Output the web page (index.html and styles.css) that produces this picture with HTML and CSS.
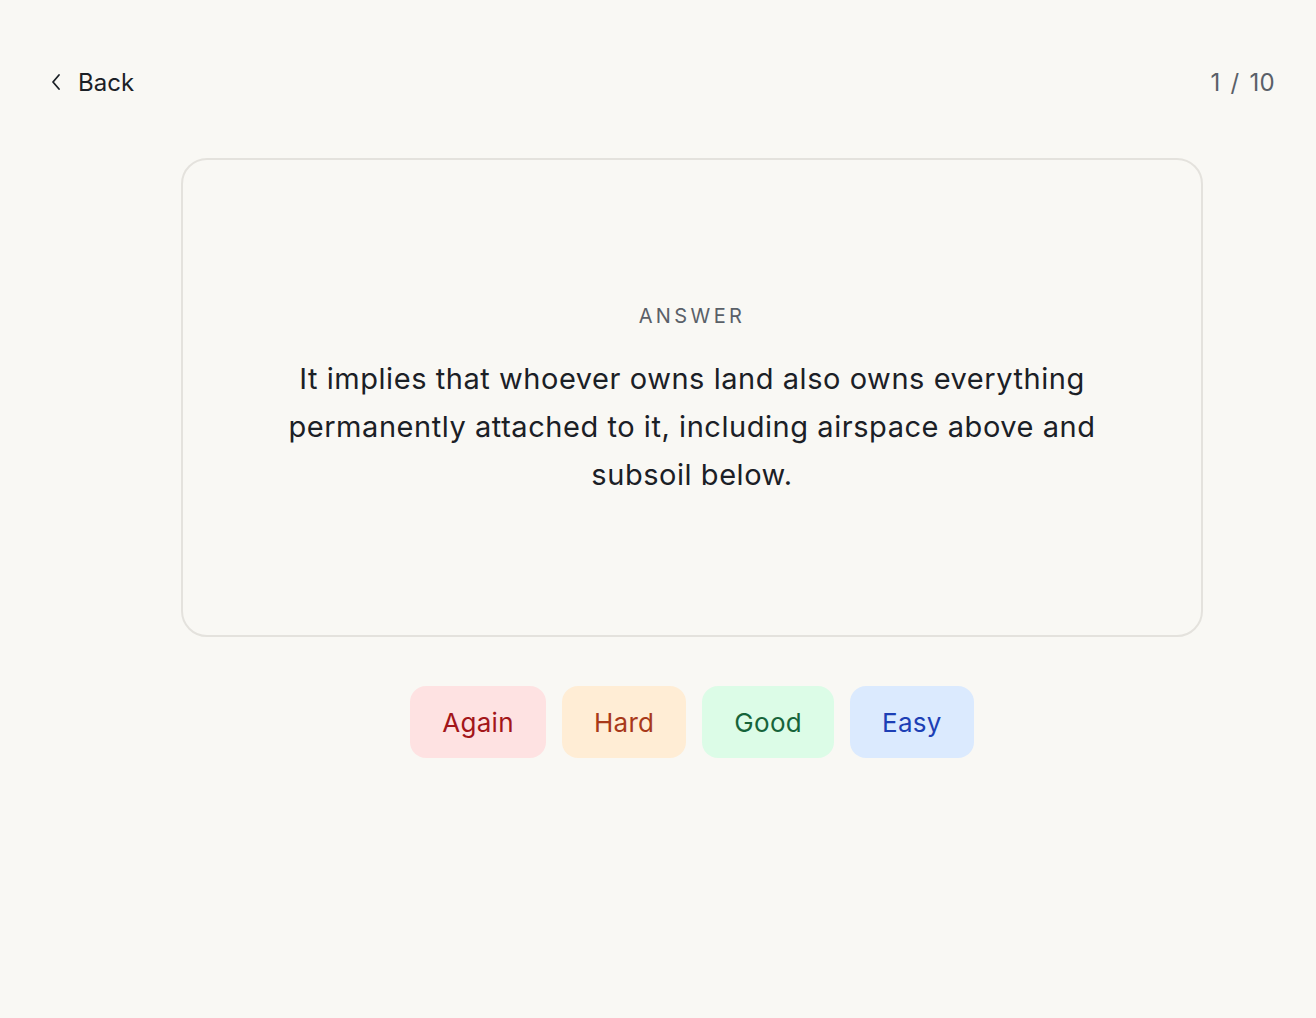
FILE: index.html
```html
<!DOCTYPE html>
<html lang="en">
<head>
<meta charset="utf-8">
<title>Review</title>
<link rel="stylesheet" href="styles.css">
</head>
<body>
<div class="page">
  <header class="topbar">
    <a class="back" href="#">
      <svg class="chev" width="12" height="18" viewBox="0 0 12 18" fill="none" stroke="currentColor" stroke-width="1.8" stroke-linecap="round" stroke-linejoin="round"><path d="M9 2 L3 9 L9 16"/></svg>
      <span>Back</span>
    </a>
    <div class="count">1 / 10</div>
  </header>
  <main class="main">
    <section class="card">
      <div class="label">ANSWER</div>
      <p class="answer">It implies that whoever owns land also owns everything permanently attached to it, including airspace above and subsoil below.</p>
    </section>
    <div class="actions">
      <button class="btn again">Again</button>
      <button class="btn hard">Hard</button>
      <button class="btn good">Good</button>
      <button class="btn easy">Easy</button>
    </div>
  </main>
</div>
</body>
</html>
```
FILE: styles.css
```css
* { box-sizing: border-box; }
html, body { margin: 0; padding: 0; }
body {
  background: #f9f8f4;
  font-family: "Inter", "Open Sans", sans-serif;
  color: #1b2026;
}
.page { min-height: 1018px; }
.topbar {
  display: flex;
  justify-content: space-between;
  align-items: center;
  padding: 64px 41px 0 50px;
  height: 100px;
}
.back {
  display: flex;
  align-items: center;
  gap: 16px;
  color: #1b2026;
  text-decoration: none;
  font-size: 24px;
}
.chev { display: block; }
.count {
  font-size: 24px;
  color: #5a6068;
  word-spacing: 3px;
  letter-spacing: 0.3px;
}
.main {
  padding-left: 181px;
  padding-top: 58px;
}
.card {
  width: 1022px;
  height: 479px;
  border: 2px solid #e4e2dd;
  border-radius: 26px;
  display: flex;
  flex-direction: column;
  align-items: center;
  justify-content: center;
  padding: 8px 60px 0;
  text-align: center;
}
.label {
  font-size: 20px;
  letter-spacing: 3.4px;
  color: #5a6068;
  margin-bottom: 27px;
}
.answer {
  margin: 0;
  font-size: 29px;
  letter-spacing: 0.55px;
  line-height: 48px;
  color: #1b2026;
  max-width: 830px;
}
.actions {
  width: 1022px;
  display: flex;
  justify-content: center;
  gap: 16px;
  margin-top: 49px;
}
.btn {
  border: none;
  font-family: inherit;
  font-size: 26px;
  letter-spacing: 0.3px;
  height: 72px;
  padding: 0 32px;
  border-radius: 16px;
}
.again { background: #fee2e2; color: #a3161a; }
.hard { background: #ffedd5; color: #a8391a; }
.good { background: #dcfce7; color: #16643a; }
.easy { background: #dbeafe; color: #1d3fb5; }
```
